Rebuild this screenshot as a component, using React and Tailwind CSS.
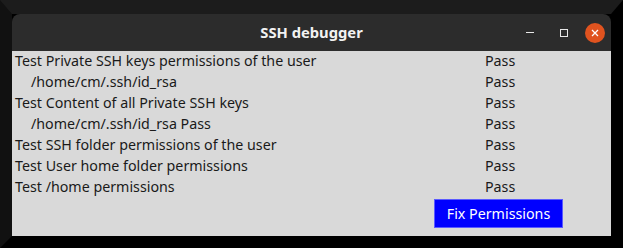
import React from "react";

const rows = [
  { label: "Test Private SSH keys permissions of the user", result: "Pass" },
  { label: "/home/cm/.ssh/id_rsa", result: "Pass", sub: true },
  { label: "Test Content of all Private SSH keys", result: "Pass" },
  { label: "/home/cm/.ssh/id_rsa Pass", result: "Pass", sub: true },
  { label: "Test SSH folder permissions of the user", result: "Pass" },
  { label: "Test User home folder permissions", result: "Pass" },
  { label: "Test /home permissions", result: "Pass" },
];

function TitleBar() {
  return (
    <div className="relative flex h-[37px] items-center justify-center rounded-t-[8px] bg-[#2c2c2c]">
      <span className="text-[14.75px] font-bold text-[#f2f2f2]">SSH debugger</span>
      <div className="absolute right-[6px] top-0 flex h-full items-center">
        <div className="flex h-[20px] w-[34px] items-center justify-center">
          <div className="h-[1px] w-[8px] bg-[#e8e8e8]" />
        </div>
        <div className="flex h-[20px] w-[34px] items-center justify-center">
          <div className="h-[8px] w-[8px] border border-[#e8e8e8]" />
        </div>
        <div className="ml-[4px] flex h-[20px] w-[20px] items-center justify-center rounded-full bg-[#e0531f]">
          <svg width="8" height="8" viewBox="0 0 8 8">
            <path d="M1 1 L7 7 M7 1 L1 7" stroke="#fff" strokeWidth="1.3" />
          </svg>
        </div>
      </div>
    </div>
  );
}

export default function App() {
  return (
    <div
      className="h-[248px] w-[623px] border-t-[14px] border-r-[12px] border-b-[12px] border-l-[12px] border-t-[#1c1c1c] border-r-black border-b-black border-l-[#111111] bg-black"
      style={{ fontFamily: '"Noto Sans", "DejaVu Sans", sans-serif' }}
    >
      <div className="flex h-full flex-col">
        <TitleBar />
        <div className="flex flex-1 flex-col bg-[#d9d9d9] text-[14.25px] text-[#1a1a1a]">
          {rows.map((r, i) => (
            <div key={i} className="flex h-[21px] items-start leading-[19px]">
              <div className={"w-[473px] " + (r.sub ? "pl-[19px]" : "pl-[3px]")}>{r.label}</div>
              <div>{r.result}</div>
            </div>
          ))}
          <div className="mt-[1px] flex pl-[422px]">
            <button className="h-[29px] w-[129px] border border-[#5a5aff] bg-[#0000ff] text-[14.25px] text-white">
              Fix Permissions
            </button>
          </div>
        </div>
      </div>
    </div>
  );
}
